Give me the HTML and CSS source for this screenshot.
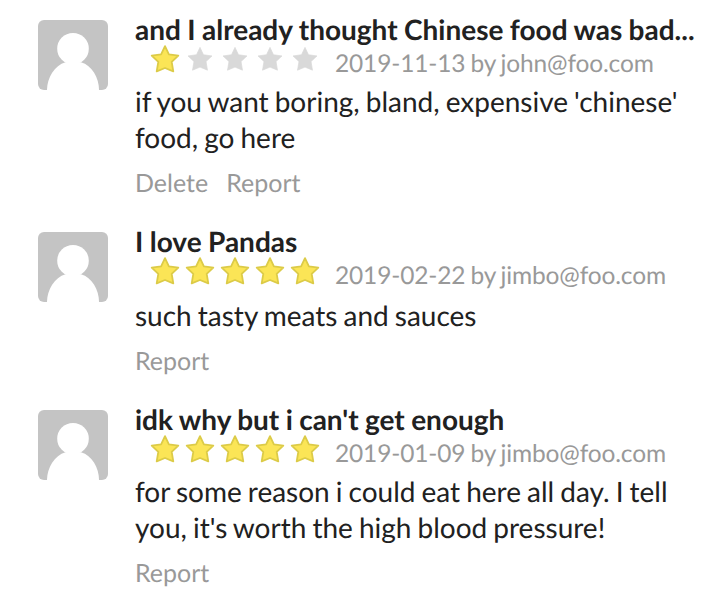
FILE: index.html
```html
<!DOCTYPE html>
<html lang="en">
<head>
<meta charset="utf-8">
<title>Reviews</title>
<link rel="stylesheet" href="styles.css">
</head>
<body>
<svg class="defs" aria-hidden="true">
  <symbol id="avatar" viewBox="0 0 70 70"><circle cx="35" cy="28.7" r="15.8" fill="#fff"/><path d="M9 70C9 58 16.5 45.5 27.5 42.3L43 42.3C54 45.5 61 58 61 70Z" fill="#fff"/></symbol>
  <symbol id="star" viewBox="0 0 30 30"><path d="M15 2.1L18.9 10.3L28.3 11.6L21.7 17.8L23.3 27.4L15 24L6.7 27.4L8.3 17.8L1.7 11.6L11.1 10.3Z"/></symbol>
</svg>
<main class="comments">
  <article class="comment">
    <svg class="avatar"><use href="#avatar"/></svg>
    <div class="content">
      <h2 class="author">and I already thought Chinese food was bad...</h2>
      <div class="meta"><span class="rating"><svg class="star on"><use href="#star"/></svg><svg class="star"><use href="#star"/></svg><svg class="star"><use href="#star"/></svg><svg class="star"><use href="#star"/></svg><svg class="star"><use href="#star"/></svg></span><span class="date">2019-11-13 by john@foo.com</span></div>
      <p class="text">if you want boring, bland, expensive 'chinese' food, go here</p>
      <div class="actions"><a>Delete</a><a>Report</a></div>
    </div>
  </article>
  <article class="comment">
    <svg class="avatar"><use href="#avatar"/></svg>
    <div class="content">
      <h2 class="author">I love Pandas</h2>
      <div class="meta"><span class="rating"><svg class="star on"><use href="#star"/></svg><svg class="star on"><use href="#star"/></svg><svg class="star on"><use href="#star"/></svg><svg class="star on"><use href="#star"/></svg><svg class="star on"><use href="#star"/></svg></span><span class="date">2019-02-22 by jimbo@foo.com</span></div>
      <p class="text single">such tasty meats and sauces</p>
      <div class="actions"><a>Report</a></div>
    </div>
  </article>
  <article class="comment">
    <svg class="avatar"><use href="#avatar"/></svg>
    <div class="content">
      <h2 class="author">idk why but i can't get enough</h2>
      <div class="meta"><span class="rating"><svg class="star on"><use href="#star"/></svg><svg class="star on"><use href="#star"/></svg><svg class="star on"><use href="#star"/></svg><svg class="star on"><use href="#star"/></svg><svg class="star on"><use href="#star"/></svg></span><span class="date">2019-01-09 by jimbo@foo.com</span></div>
      <p class="text">for some reason i could eat here all day. I tell you, it's worth the high blood pressure!</p>
      <div class="actions"><a>Report</a></div>
    </div>
  </article>
</main>
</body>
</html>
```

FILE: styles.css
```css
* { box-sizing: border-box; }
body { margin: 0; background: #fff; color: #212121; font-family: Lato, sans-serif; font-size: 28px; text-rendering: geometricPrecision; overflow: hidden; }
.defs { display: none; }
.comments { display: flex; flex-direction: column; gap: 27px; padding: 12px 0 0 38px; }
.comment { display: flex; gap: 27px; }
.avatar { flex: none; width: 70px; height: 70px; margin-top: 8px; border-radius: 6px; background: #c4c4c4; }
.content { width: 562px; }
.author { height: 36px; margin: 0; font-size: 28px; font-weight: 700; line-height: 34px; word-spacing: -.4px; white-space: nowrap; }
.meta { display: flex; height: 35px; padding-left: 15px; color: #999; font-size: 24.5px; line-height: 32px; white-space: nowrap; }
.rating { display: flex; gap: 5px; margin-right: 15px; }
.date { letter-spacing: -.15px; word-spacing: -1.1px; }
.star { width: 30px; height: 30px; margin-top: -4px; fill: #d9d9d9; stroke: #d9d9d9; stroke-width: .8; stroke-linejoin: round; }
.star:not(.on) { padding: 1.5px; }
.star.on { fill: #fbe556; stroke: #dccb48; stroke-width: 1.8; }
.text { margin: 0; line-height: 36px; word-spacing: -1.1px; }
.text.single { height: 38px; line-height: 40px; }
.actions { display: flex; gap: 18px; margin-top: 14px; height: 28px; color: #999; font-size: 25px; line-height: 28px; }
```
